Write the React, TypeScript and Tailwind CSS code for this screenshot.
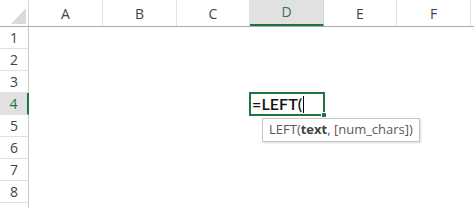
const COLS = [
  { label: "A", w: "w-[74px]" },
  { label: "B", w: "w-[74px]" },
  { label: "C", w: "w-[73px]" },
  { label: "D", w: "w-[74px]" },
  { label: "E", w: "w-[73px]" },
  { label: "F", w: "w-[74px]" },
];

const ROWS = [1, 2, 3, 4, 5, 6, 7, 8, 9];

function Corner() {
  return (
    <div className="w-[29px] h-full shrink-0 border-r border-[#d4d4d4] relative">
      <svg className="absolute left-[11px] top-[8px]" width="15" height="16" viewBox="0 0 15 16">
        <polygon points="15,0 15,16 0,16" fill="#dadada" />
      </svg>
    </div>
  );
}

function ActiveCell() {
  return (
    <>
      <div className="absolute -left-[1px] -top-[1px] w-[76px] h-[24px] border-2 border-[#217346] flex items-center pl-[1px]">
        <span className="font-['Lato',sans-serif] text-[16px] leading-none text-[#111] font-semibold tracking-[0.1px]">
          =LEFT(
        </span>
        <span className="w-px h-[17px] bg-black ml-[1px]" />
        <span className="absolute -right-[4px] -bottom-[4px] w-[6px] h-[6px] bg-[#217346] border border-white" />
      </div>
      <div className="absolute left-[12px] top-[25px] z-10 h-[24px] px-[6px] flex items-center whitespace-nowrap bg-white border border-[#c6c6c6] shadow-[1px_1px_2px_rgba(0,0,0,0.15)] font-['Open_Sans',sans-serif] text-[13px] text-[#595959]">
        LEFT(<b className="font-bold text-[#444]">text</b>, [num_chars])
      </div>
    </>
  );
}

export default function App() {
  return (
    <div className="w-[474px] h-[208px] overflow-hidden bg-white font-['Open_Sans',sans-serif] text-[#444]">
      <div className="flex h-[27px] border-b border-[#ababab]">
        <Corner />
        {COLS.map((c) => {
          const active = c.label === "D";
          return (
            <div
              key={c.label}
              className={`${c.w} shrink-0 h-full flex items-end justify-center pb-[2px] text-[14px] ${
                active
                  ? "bg-[#e1e1e1] text-[#3f6e54] border-b-2 border-[#217346] -mb-px border-r border-r-[#d4d4d4]"
                  : "border-r border-[#e1e1e1]"
              }`}
            >
              {c.label}
            </div>
          );
        })}
        <div className="flex-1" />
      </div>
      {ROWS.map((r) => {
        const active = r === 4;
        return (
          <div key={r} className="flex h-[22px]">
            <div
              className={`w-[29px] shrink-0 h-full flex items-center justify-center text-[14px] border-b border-[#e1e1e1] ${
                active
                  ? "bg-[#e1e1e1] text-[#217346] border-r-2 border-r-[#217346]"
                  : "border-r border-r-[#c8c8c8]"
              }`}
            >
              {r < 9 ? r : ""}
            </div>
            {COLS.map((c) => (
              <div key={c.label} className={`${c.w} shrink-0 h-full relative`}>
                {active && c.label === "D" && <ActiveCell />}
              </div>
            ))}
          </div>
        );
      })}
    </div>
  );
}
